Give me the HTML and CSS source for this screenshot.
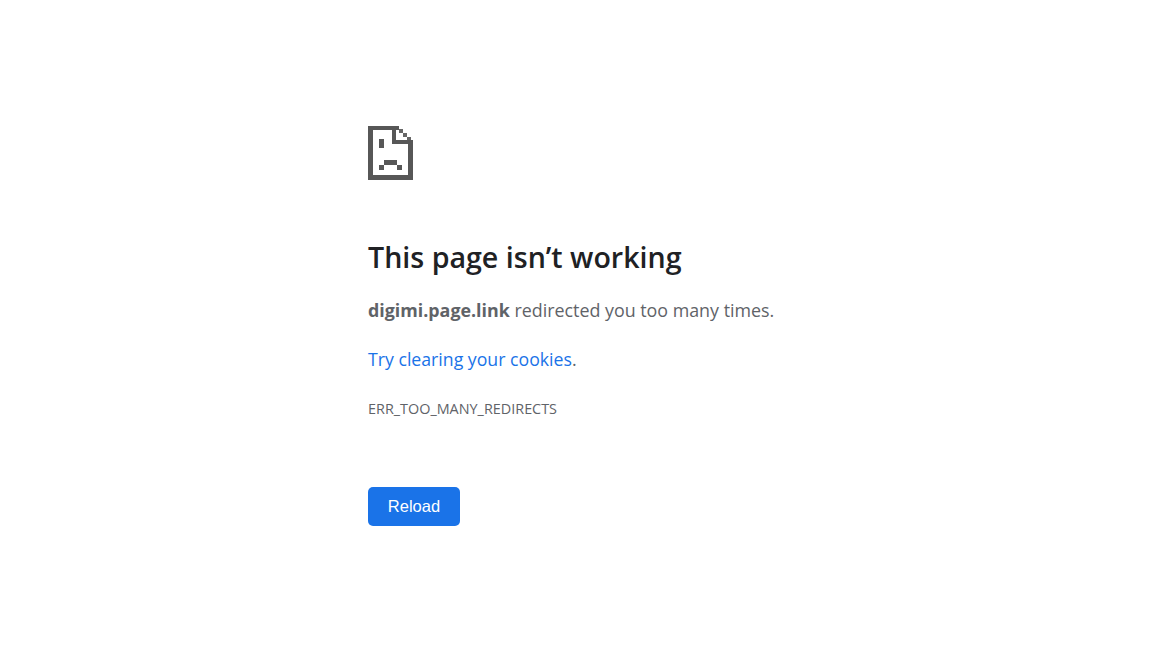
FILE: index.html
```html
<!DOCTYPE html>
<html lang="en">
<head>
    <meta charset="UTF-8">
    <meta name="viewport" content="width=device-width, initial-scale=1.0">
    <title>digimi.page.link</title>
    <link rel="stylesheet" href="styles.css">
</head>
<body>

<div class="container">
    <svg class="icon" width="45" height="54" viewBox="0 0 45 54" shape-rendering="crispEdges">
        <!-- page outline and folded corner -->
        <path fill="#575757" d="M0 0H31V4H5V49H40V18H24V4H28V14H45V54H0Z"/>
        <path fill="#666666" d="M31 3H35V7H31ZM35 7H39V11H35ZM39 11H43V14H39Z"/>
        <!-- sad face -->
        <path fill="#575757" d="M11 13H16V22H11ZM16 34H29V39H16ZM11 39H16V44H11ZM29 39H34V44H29Z"/>
    </svg>

    <h1>This page isn’t working</h1>
    <p class="summary"><strong>digimi.page.link</strong> redirected you too many times.</p>
    <p class="summary"><a href="#">Try clearing your cookies</a>.</p>
    <div class="error-code">ERR_TOO_MANY_REDIRECTS</div>

    <button>Reload</button>
</div>

</body>
</html>
```

FILE: styles.css
```css
body {
    font-family: "Open Sans", "Noto Sans", sans-serif;
    background-color: #fff;
    color: #5f6368;
    margin: 0;
}
.container {
    width: 430px;
    margin: 0 auto;
    padding-top: 126px;
}
.icon {
    display: block;
    margin-bottom: 58px;
}
h1 {
    color: #202124;
    font-size: 28.6px;
    font-weight: 600;
    line-height: 38px;
    margin: 0 0 21px;
}
.summary {
    font-size: 17.85px;
    line-height: 27px;
    margin: 0 0 22px;
}
.summary strong {
    font-weight: 700;
}
a {
    color: #1a73e8;
    font-size: 17.7px;
    text-decoration: none;
}
.error-code {
    font-size: 14.4px;
    line-height: 20px;
    margin-top: 26px;
}
button {
    display: block;
    margin-top: 68px;
    width: 92px;
    height: 39px;
    background-color: #1a73e8;
    color: #fff;
    font-family: "Liberation Sans", Arial, sans-serif;
    font-size: 16.5px;
    border: none;
    border-radius: 5px;
    cursor: pointer;
}
```
